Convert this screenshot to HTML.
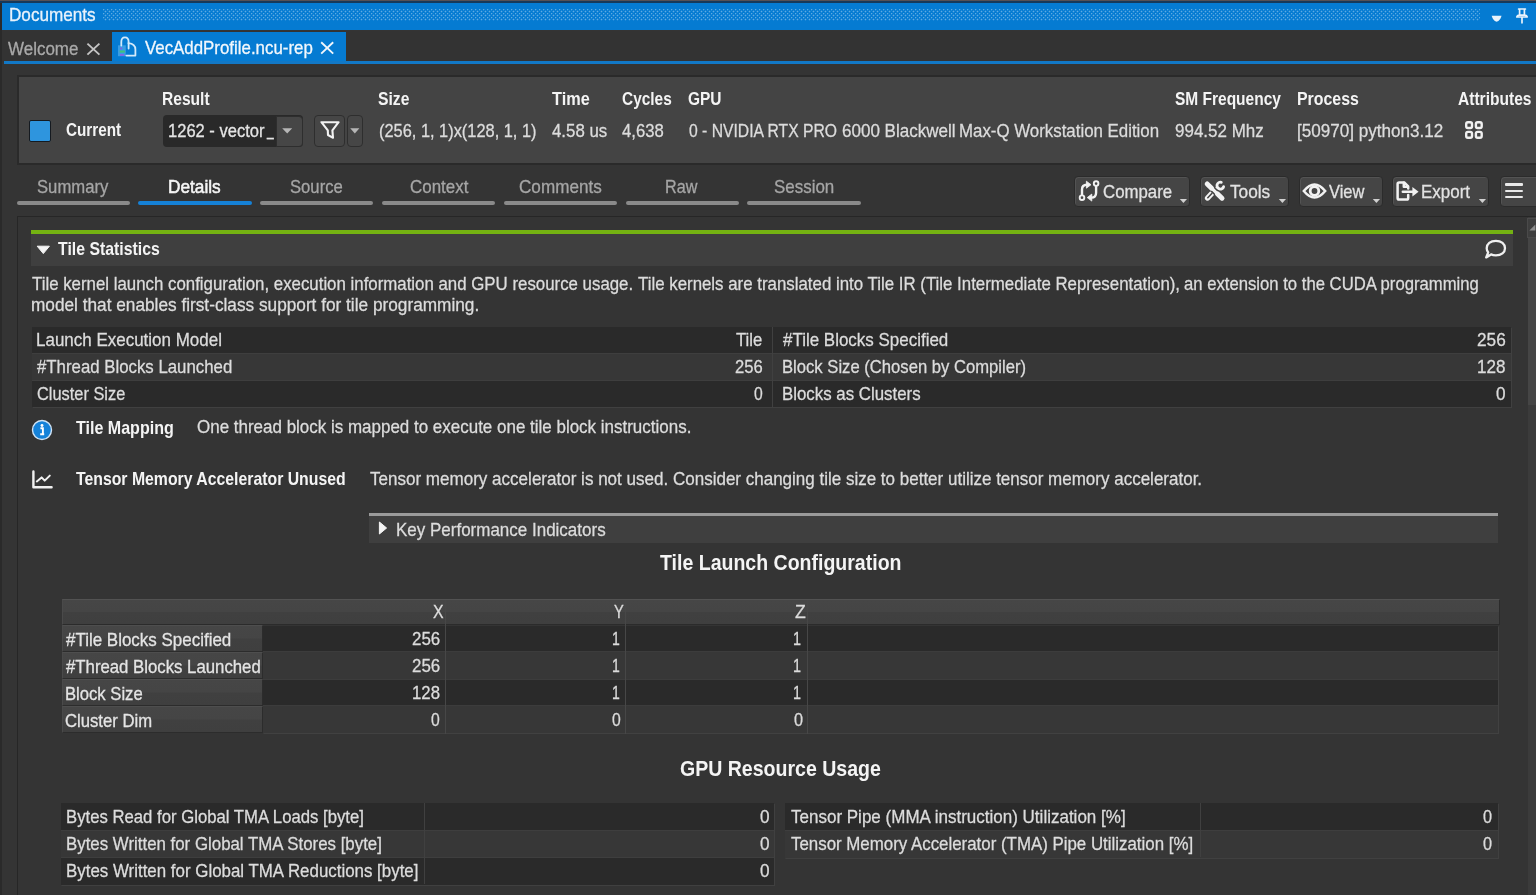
<!DOCTYPE html>
<html lang="en"><head><meta charset="utf-8"><title>VecAddProfile.ncu-rep</title>
<style>
html,body{margin:0;padding:0;}
body{width:1536px;height:895px;overflow:hidden;background:#343434;font-family:"Liberation Sans", Arial, sans-serif;position:relative;}
#app{position:absolute;left:0;top:0;width:1536px;height:895px;overflow:hidden;filter:blur(0.4px);}
#app div,#app svg{position:absolute;box-sizing:border-box;}
.t{position:absolute;white-space:pre;line-height:24px;height:24px;transform-origin:0 50%;display:block;-webkit-text-stroke:0.3px currentColor;}
.act{-webkit-text-stroke:0.55px currentColor;}
</style></head><body><div id="app">
<div style="left:0px;top:0px;width:1536px;height:3px;background:#16395a;"></div>
<div style="left:0px;top:0px;width:1536px;height:1.4px;background:#555055;"></div>
<div style="left:0px;top:3px;width:1.5px;height:892px;background:#2a2a2a;"></div>
<div style="left:2px;top:2.7px;width:1534px;height:27.8px;background:#057bd2;"></div>
<div style="left:103px;top:9px;width:1377px;height:12px;background:radial-gradient(circle at 0.5px 0.5px,rgba(255,255,255,.36) 0.5px,rgba(255,255,255,.10) 1.0px,transparent 1.4px) 0 0/4px 4px,radial-gradient(circle at 2.5px 2.5px,rgba(255,255,255,.36) 0.5px,rgba(255,255,255,.10) 1.0px,transparent 1.4px) 0 0/4px 4px;"></div>
<svg style="left:1490px;top:14px" width="14" height="10" viewBox="0 0 14 10"><path d="M1.7 1.8 H11.5 Q10.5 6.5 6.6 7.8 Q2.7 6.5 1.7 1.8Z" fill="#e8f2fb"/></svg>
<svg style="left:1514px;top:7px" width="16" height="18" viewBox="0 0 16 18"><path d="M4.6 2 H11.4 M5.6 2.4 V8.2 M10.4 2.4 V8.2 M2.8 10 Q3.2 8.4 5 8.2 H11 Q12.8 8.4 13.2 10 Z M8 10.4 V15.8" fill="none" stroke="#eaf3fb" stroke-width="1.7" stroke-linejoin="round" stroke-linecap="round"/></svg>
<div style="left:2px;top:30.5px;width:1534px;height:31px;background:#333333;"></div>
<svg style="left:85px;top:41px" width="17" height="16" viewBox="0 0 17 16"><path d="M2.4 2.6 L14.4 13.6 M14.4 2.6 L2.4 13.6" stroke="#c4c4c4" stroke-width="1.9" fill="none"/></svg>
<div style="left:111.8px;top:31.8px;width:234.2px;height:31.5px;background:#057bd2;"></div>
<div style="left:4px;top:60.7px;width:1532px;height:3.5px;background:#1278c6;"></div>
<svg style="left:116px;top:35px" width="22" height="23" viewBox="0 0 22 23"><rect x="2" y="10.3" width="7.8" height="10.9" fill="#3a9de4"/><g fill="none" stroke="#d3e9fa" stroke-width="1.8" stroke-linecap="round" stroke-linejoin="round"><path d="M5.3 10.6 V7 Q5.3 2.4 9 2.4 Q12.6 2.4 12.6 7 V13.6"/><path d="M12.4 8.2 Q19.4 8.8 19.4 14.6 V20.6 H10.4"/></g><rect x="4" y="12.6" width="2.2" height="1.7" fill="#7d62e2"/><rect x="3.7" y="15.5" width="5.2" height="2.1" fill="#3fc47c"/><rect x="4" y="19.1" width="4.2" height="1.7" fill="#8a5fe6"/></svg>
<svg style="left:319px;top:40px" width="17" height="16" viewBox="0 0 17 16"><path d="M2.2 2.2 L14.2 13.6 M14.2 2.2 L2.2 13.6" stroke="#f0f6fc" stroke-width="1.9" fill="none"/></svg>
<div style="left:16.5px;top:75.4px;width:1530px;height:89.4px;background:#444444;border:2px solid #2a2a2a;"></div>
<div style="left:29px;top:120px;width:22px;height:22px;background:#2e95de;border:1.6px solid #151a20;border-radius:2px;"></div>
<div style="left:162.5px;top:115px;width:140.5px;height:31.8px;background:#292929;border-radius:4px;"></div>
<div style="left:275.5px;top:115.5px;width:27.5px;height:31px;background:#464646;border:1.6px solid #2e2e2e;border-radius:0 4px 4px 0;"></div>
<svg style="left:281px;top:127px" width="13" height="8" viewBox="0 0 13 8"><path d="M1.2 1.2 H11.2 L6.2 6.6Z" fill="#b6b6b6"/></svg>
<div style="left:313.6px;top:115.3px;width:31.8px;height:31.4px;background:#464646;border:1.6px solid #2e2e2e;border-radius:4px;"></div>
<div style="left:347.2px;top:115.3px;width:15.6px;height:31.4px;background:#464646;border:1.6px solid #2e2e2e;border-radius:4px;"></div>
<svg style="left:319px;top:119px" width="22" height="23" viewBox="0 0 22 23"><path d="M2.4 3.2 H19.6 L13.4 11.4 L14 18.8 L9 16 L8.8 11.4 Z" fill="none" stroke="#f2f2f2" stroke-width="2.1" stroke-linejoin="round"/></svg>
<svg style="left:349px;top:127px" width="12" height="8" viewBox="0 0 12 8"><path d="M1.2 1.2 H10.4 L5.8 6.4Z" fill="#b6b6b6"/></svg>
<svg style="left:1465.4px;top:120.7px" width="19" height="19" viewBox="0 0 19 19"><g fill="none" stroke="#f0f0f0" stroke-width="2.4"><rect x="1.2" y="1.2" width="5.8" height="5.8" rx="1.7"/><rect x="10.9" y="1.2" width="5.8" height="5.8" rx="1.7"/><rect x="1.2" y="10.9" width="5.8" height="5.8" rx="1.7"/><rect x="10.9" y="10.9" width="5.8" height="5.8" rx="1.7"/></g></svg>
<div style="left:16.5px;top:201px;width:113.5px;height:4.4px;background:#8a8a8a;border-radius:2.2px;"></div>
<div style="left:138px;top:201px;width:113.5px;height:4.4px;background:#1581d7;border-radius:2.2px;"></div>
<div style="left:260px;top:201px;width:113px;height:4.4px;background:#8a8a8a;border-radius:2.2px;"></div>
<div style="left:381.7px;top:201px;width:113.5px;height:4.4px;background:#8a8a8a;border-radius:2.2px;"></div>
<div style="left:504px;top:201px;width:113px;height:4.4px;background:#8a8a8a;border-radius:2.2px;"></div>
<div style="left:625.5px;top:201px;width:113.5px;height:4.4px;background:#8a8a8a;border-radius:2.2px;"></div>
<div style="left:747px;top:201px;width:114px;height:4.4px;background:#8a8a8a;border-radius:2.2px;"></div>
<div style="left:1074px;top:176.2px;width:116.0px;height:30.8px;background:#454545;border:1px solid #2b2b2b;border-radius:4px;box-shadow:inset 1px 1px 0 #535353;"></div>
<div style="left:1200px;top:176.2px;width:89.0px;height:30.8px;background:#454545;border:1px solid #2b2b2b;border-radius:4px;box-shadow:inset 1px 1px 0 #535353;"></div>
<div style="left:1299px;top:176.2px;width:83.5px;height:30.8px;background:#454545;border:1px solid #2b2b2b;border-radius:4px;box-shadow:inset 1px 1px 0 #535353;"></div>
<div style="left:1392px;top:176.2px;width:96.5px;height:30.8px;background:#454545;border:1px solid #2b2b2b;border-radius:4px;box-shadow:inset 1px 1px 0 #535353;"></div>
<div style="left:1499.5px;top:176.2px;width:46.0px;height:30.8px;background:#454545;border:1px solid #2b2b2b;border-radius:4px;box-shadow:inset 1px 1px 0 #535353;"></div>
<svg style="left:1179px;top:198px" width="9" height="6" viewBox="0 0 9 6"><path d="M0.8 1 H8 L4.4 5Z" fill="#d0d0d0"/></svg>
<svg style="left:1278px;top:198px" width="9" height="6" viewBox="0 0 9 6"><path d="M0.8 1 H8 L4.4 5Z" fill="#d0d0d0"/></svg>
<svg style="left:1372px;top:198px" width="9" height="6" viewBox="0 0 9 6"><path d="M0.8 1 H8 L4.4 5Z" fill="#d0d0d0"/></svg>
<svg style="left:1478px;top:198px" width="9" height="6" viewBox="0 0 9 6"><path d="M0.8 1 H8 L4.4 5Z" fill="#d0d0d0"/></svg>
<svg style="left:1077px;top:179px" width="24" height="24" viewBox="0 0 24 24"><g fill="none" stroke="#f2f2f2" stroke-width="2.4" stroke-linecap="round" stroke-linejoin="round"><path d="M5 16 V10.4 Q5 5.7 9.8 5.7"/><path d="M19.1 7.2 V13.8 Q19.1 18.6 14.4 18.6"/></g><path d="M9.4 2.2 L14 5.7 L9.4 9.2Z" fill="#f2f2f2" stroke="#f2f2f2" stroke-width="0.8" stroke-linejoin="round"/><path d="M14.8 15.1 L10.2 18.6 L14.8 22.1Z" fill="#f2f2f2" stroke="#f2f2f2" stroke-width="0.8" stroke-linejoin="round"/><circle cx="5" cy="18.7" r="2.3" fill="#454545" stroke="#f2f2f2" stroke-width="1.9"/><circle cx="19.1" cy="4.6" r="2.3" fill="#454545" stroke="#f2f2f2" stroke-width="1.9"/></svg>
<svg style="left:1203px;top:179px" width="24" height="24" viewBox="0 0 24 24"><g fill="none" stroke-linecap="round"><path d="M4.6 19 L9 14.2" stroke="#f2f2f2" stroke-width="5.4"/><path d="M4.8 18.8 L8.8 14.4" stroke="#454545" stroke-width="1.5"/><path d="M9.6 12.4 L14.4 8.6" stroke="#f2f2f2" stroke-width="2.8"/><path d="M20.6 7.7 A3.4 3.4 0 1 1 18.3 3.4" stroke="#f2f2f2" stroke-width="2.8"/><path d="M4.2 5 L19 19.2" stroke="#454545" stroke-width="6.4"/><path d="M4.2 5 L8.6 9.2" stroke="#f2f2f2" stroke-width="5"/><path d="M8.6 9.2 L14 14.4" stroke="#f2f2f2" stroke-width="3.2"/><path d="M14.4 14.8 L19 19.2" stroke="#f2f2f2" stroke-width="5"/></g></svg>
<svg style="left:1301.5px;top:180px" width="25" height="22" viewBox="0 0 25 22"><path d="M1.8 11 Q12.5 -2 23.2 11 Q12.5 24 1.8 11Z" fill="none" stroke="#f2f2f2" stroke-width="2.5"/><circle cx="12.5" cy="11" r="4.3" fill="none" stroke="#f2f2f2" stroke-width="2.8"/></svg>
<svg style="left:1394.5px;top:179px" width="26" height="24" viewBox="0 0 26 24"><g fill="none" stroke="#f2f2f2" stroke-width="2.5" stroke-linejoin="round" stroke-linecap="round"><path d="M13.2 16 V19 Q13.2 20.6 11.6 20.6 H4.2 Q2.6 20.6 2.6 19 V5 Q2.6 3.4 4.2 3.4 H9.2 L13.2 7.4 V9.6"/><path d="M8.8 3.8 V7.8 H12.8"/><path d="M7.8 12.8 H18"/></g><path d="M17.4 8 L23.6 12.8 L17.4 17.6Z" fill="#f2f2f2"/></svg>
<div style="left:1504.6px;top:183.2px;width:18.3px;height:2.8px;background:#e8e8e8;border-radius:1px;"></div>
<div style="left:1504.6px;top:189.5px;width:18.3px;height:2.8px;background:#e8e8e8;border-radius:1px;"></div>
<div style="left:1504.6px;top:195.7px;width:18.3px;height:2.8px;background:#e8e8e8;border-radius:1px;"></div>
<div style="left:17px;top:216.3px;width:1530px;height:700px;background:#343434;border:1.3px solid #262626;"></div>
<div style="left:1527.6px;top:217px;width:9px;height:678px;background:#3b3b3b;"></div>
<div style="left:1527.6px;top:238px;width:9px;height:167px;background:#454545;"></div>
<div style="left:1526.5px;top:218px;width:10px;height:19.5px;background:#3e3e3e;border:1px solid #4a4a4a;"></div>
<svg style="left:1529px;top:224px" width="8" height="8" viewBox="0 0 8 8"><path d="M0.4 6.6 L6.4 0.6 V6.6Z" fill="#8c8c8c"/></svg>
<div style="left:30.5px;top:233px;width:1482px;height:32.7px;background:#3f3f3f;"></div>
<div style="left:30.5px;top:230.2px;width:1482px;height:3.8px;background:#74b212;"></div>
<svg style="left:36px;top:245px" width="15" height="10" viewBox="0 0 15 10"><path d="M1.2 1.2 H13.4 L7.3 8.6Z" fill="#f4f4f4" stroke="#f4f4f4" stroke-width="1" stroke-linejoin="round"/></svg>
<svg style="left:1483px;top:238px" width="26" height="22" viewBox="0 0 26 22"><path d="M12.9 2.8 C18.4 2.8 22 6.1 22 10.2 C22 14.3 18.4 17.4 12.9 17.4 C11 17.4 9.4 17.1 8 16.4 L3.2 19.4 L5.2 14.4 C4.2 13.2 3.7 11.8 3.7 10.2 C3.7 6.1 7.4 2.8 12.9 2.8Z" fill="none" stroke="#f0f0f0" stroke-width="2.3" stroke-linejoin="round"/></svg>
<div style="left:31.5px;top:326.8px;width:1480.0px;height:27px;background:#2a2a2a;"></div>
<div style="left:31.5px;top:353.8px;width:1480.0px;height:27px;background:#373737;"></div>
<div style="left:31.5px;top:353.3px;width:1480.0px;height:1px;background:#3e3e3e;"></div>
<div style="left:31.5px;top:380.8px;width:1480.0px;height:27px;background:#2a2a2a;"></div>
<div style="left:31.5px;top:380.3px;width:1480.0px;height:1px;background:#3e3e3e;"></div>
<div style="left:31.5px;top:326.8px;width:1480.0px;height:81.5px;background:transparent;border:1px solid #404040;border-top-color:transparent;border-left-color:transparent;"></div>
<div style="left:772px;top:326.8px;width:1px;height:81px;background:#404040;"></div>
<svg style="left:31.3px;top:418.5px" width="22" height="22" viewBox="0 0 22 22"><circle cx="11" cy="11" r="9.5" fill="#1582d9" stroke="#cfe3f6" stroke-width="1.4"/><circle cx="11" cy="6.5" r="1.45" fill="#fff"/><path d="M9.4 9.2 H11.9 V15.2 M9.2 15.3 H13.2" stroke="#fff" stroke-width="1.9" fill="none"/></svg>
<svg style="left:31px;top:469px" width="23" height="21" viewBox="0 0 23 21"><path d="M2.4 2.4 V18.2 H20.6" fill="none" stroke="#f0f0f0" stroke-width="2.4" stroke-linejoin="round" stroke-linecap="round"/><path d="M5.8 12.4 L10.6 8.4 L13.7 11.6 L18.8 6.6" fill="none" stroke="#f0f0f0" stroke-width="2" stroke-linejoin="round" stroke-linecap="round"/></svg>
<div style="left:369px;top:513px;width:1129px;height:30.2px;background:#3f3f3f;"></div>
<div style="left:369px;top:513px;width:1129px;height:3.2px;background:#9a9a9a;"></div>
<svg style="left:377px;top:520px" width="12" height="16" viewBox="0 0 12 16"><path d="M2.4 2 L9.6 8 L2.4 14Z" fill="#f4f4f4" stroke="#f4f4f4" stroke-width="1" stroke-linejoin="round"/></svg>
<div style="left:62px;top:598.5px;width:1437.5px;height:26.6px;background:linear-gradient(#464646 0,#454545 48%,#404040 52%,#3f3f3f 100%);border:1px solid #525252;border-bottom:1.4px solid #2b2b2b;border-right:1.4px solid #2b2b2b;border-left-color:#4a4a4a;"></div>
<div style="left:262.5px;top:625.6px;width:1235.5px;height:25.600000000000023px;background:#2a2a2a;"></div>
<div style="left:262.5px;top:651.2px;width:1235.5px;height:28.399999999999977px;background:#373737;"></div>
<div style="left:262.5px;top:650.7px;width:1235.5px;height:1px;background:#3c3c3c;"></div>
<div style="left:262.5px;top:679.6px;width:1235.5px;height:25.799999999999955px;background:#2a2a2a;"></div>
<div style="left:262.5px;top:679.1px;width:1235.5px;height:1px;background:#3c3c3c;"></div>
<div style="left:262.5px;top:705.4px;width:1235.5px;height:28.399999999999977px;background:#373737;"></div>
<div style="left:262.5px;top:704.9px;width:1235.5px;height:1px;background:#3c3c3c;"></div>
<div style="left:262.5px;top:625.6px;width:1236px;height:108.8px;background:transparent;border:1px solid #414141;border-top-color:transparent;border-left-color:transparent;"></div>
<div style="left:62px;top:625px;width:200.5px;height:27px;background:linear-gradient(#464646 0,#454545 48%,#404040 52%,#3f3f3f 100%);border:1px solid #2c2c2c;border-top-color:#4e4e4e;border-left-color:#4a4a4a;"></div>
<div style="left:62px;top:652px;width:200.5px;height:27px;background:linear-gradient(#464646 0,#454545 48%,#404040 52%,#3f3f3f 100%);border:1px solid #2c2c2c;border-top-color:#4e4e4e;border-left-color:#4a4a4a;"></div>
<div style="left:62px;top:679px;width:200.5px;height:27px;background:linear-gradient(#464646 0,#454545 48%,#404040 52%,#3f3f3f 100%);border:1px solid #2c2c2c;border-top-color:#4e4e4e;border-left-color:#4a4a4a;"></div>
<div style="left:62px;top:706px;width:200.5px;height:27px;background:linear-gradient(#464646 0,#454545 48%,#404040 52%,#3f3f3f 100%);border:1px solid #2c2c2c;border-top-color:#4e4e4e;border-left-color:#4a4a4a;"></div>
<div style="left:444.5px;top:599.5px;width:1px;height:134px;background:#474747;"></div>
<div style="left:625px;top:599.5px;width:1px;height:134px;background:#474747;"></div>
<div style="left:806.5px;top:599.5px;width:1px;height:134px;background:#474747;"></div>
<div style="left:60.5px;top:803px;width:714.0px;height:27px;background:#2a2a2a;"></div>
<div style="left:60.5px;top:830px;width:714.0px;height:27px;background:#373737;"></div>
<div style="left:60.5px;top:829.5px;width:714.0px;height:1px;background:#3e3e3e;"></div>
<div style="left:60.5px;top:857px;width:714.0px;height:28.3px;background:#2a2a2a;"></div>
<div style="left:60.5px;top:856.5px;width:714.0px;height:1px;background:#3e3e3e;"></div>
<div style="left:60.5px;top:803px;width:714.0px;height:82.8px;background:transparent;border:1px solid #404040;border-top-color:transparent;border-left-color:transparent;"></div>
<div style="left:423.5px;top:803px;width:1px;height:81px;background:#404040;"></div>
<div style="left:784.5px;top:803px;width:714.0px;height:27px;background:#2a2a2a;"></div>
<div style="left:784.5px;top:830px;width:714.0px;height:28.8px;background:#373737;"></div>
<div style="left:784.5px;top:829.5px;width:714.0px;height:1px;background:#3e3e3e;"></div>
<div style="left:784.5px;top:803px;width:714.0px;height:56.3px;background:transparent;border:1px solid #404040;border-top-color:transparent;border-left-color:transparent;"></div>
<div style="left:1200px;top:803px;width:1px;height:54px;background:#404040;"></div>
<span class="t " style="left:9.07px;top:3.09px;font-size:18.50px;color:#e9f2fb;transform:scaleX(0.9262);">Documents</span>
<span class="t " style="left:8.40px;top:36.89px;font-size:18.50px;color:#a9a9a9;transform:scaleX(0.9166);">Welcome</span>
<span class="t " style="left:144.50px;top:36.39px;font-size:18.50px;color:#f2f7fc;transform:scaleX(0.9114);">VecAddProfile.ncu-rep</span>
<span class="t " style="left:65.50px;top:117.69px;font-size:18.50px;color:#f4f4f4;transform:scaleX(0.8252);font-weight:700;-webkit-text-stroke:0;">Current</span>
<span class="t " style="left:162.36px;top:86.69px;font-size:18.50px;color:#f4f4f4;transform:scaleX(0.8415);font-weight:700;-webkit-text-stroke:0;">Result</span>
<span class="t " style="left:378.30px;top:86.69px;font-size:18.50px;color:#f4f4f4;transform:scaleX(0.8495);font-weight:700;-webkit-text-stroke:0;">Size</span>
<span class="t " style="left:551.50px;top:86.69px;font-size:18.50px;color:#f4f4f4;transform:scaleX(0.8812);font-weight:700;-webkit-text-stroke:0;">Time</span>
<span class="t " style="left:621.50px;top:86.69px;font-size:18.50px;color:#f4f4f4;transform:scaleX(0.8338);font-weight:700;-webkit-text-stroke:0;">Cycles</span>
<span class="t " style="left:688.30px;top:86.69px;font-size:18.50px;color:#f4f4f4;transform:scaleX(0.8357);font-weight:700;-webkit-text-stroke:0;">GPU</span>
<span class="t " style="left:1174.50px;top:86.69px;font-size:18.50px;color:#f4f4f4;transform:scaleX(0.8375);font-weight:700;-webkit-text-stroke:0;">SM Frequency</span>
<span class="t " style="left:1296.84px;top:86.69px;font-size:18.50px;color:#f4f4f4;transform:scaleX(0.8599);font-weight:700;-webkit-text-stroke:0;">Process</span>
<span class="t " style="left:1457.50px;top:86.69px;font-size:18.50px;color:#f4f4f4;transform:scaleX(0.8407);font-weight:700;-webkit-text-stroke:0;">Attributes</span>
<span class="t " style="left:168.31px;top:119.09px;font-size:18.50px;color:#e4e4e4;transform:scaleX(0.8931);">1262 - vector</span>
<span class="t " style="left:266.55px;top:116.79px;font-size:18.50px;color:#e4e4e4;transform:scaleX(0.6500);">_</span>
<span class="t " style="left:378.61px;top:119.09px;font-size:18.50px;color:#dcdcdc;transform:scaleX(0.8855);">(256, 1, 1)x(128, 1, 1)</span>
<span class="t " style="left:551.50px;top:119.09px;font-size:18.50px;color:#dcdcdc;transform:scaleX(0.9101);">4.58 us</span>
<span class="t " style="left:622.00px;top:119.09px;font-size:18.50px;color:#dcdcdc;transform:scaleX(0.9020);">4,638</span>
<span class="t " style="left:688.50px;top:119.09px;font-size:18.50px;color:#dcdcdc;transform:scaleX(0.8483);">0 - NVIDIA RTX PRO</span>
<span class="t " style="left:842.40px;top:119.09px;font-size:18.50px;color:#dcdcdc;transform:scaleX(0.9207);">6000 Blackwell</span>
<span class="t " style="left:959.49px;top:119.09px;font-size:18.50px;color:#dcdcdc;transform:scaleX(0.9108);">Max-Q Workstation Edition</span>
<span class="t " style="left:1174.50px;top:119.09px;font-size:18.50px;color:#dcdcdc;transform:scaleX(0.9178);">994.52 Mhz</span>
<span class="t " style="left:1296.78px;top:119.09px;font-size:18.50px;color:#dcdcdc;transform:scaleX(0.9228);">[50970] python3.12</span>
<span class="t " style="left:37.00px;top:174.69px;font-size:18.50px;color:#a6a6a6;transform:scaleX(0.9011);">Summary</span>
<span class="t act" style="left:168.07px;top:174.69px;font-size:18.50px;color:#f6f6f6;transform:scaleX(0.9313);">Details</span>
<span class="t " style="left:290.00px;top:174.69px;font-size:18.50px;color:#a6a6a6;transform:scaleX(0.9001);">Source</span>
<span class="t " style="left:409.50px;top:174.69px;font-size:18.50px;color:#a6a6a6;transform:scaleX(0.9149);">Context</span>
<span class="t " style="left:519.00px;top:174.69px;font-size:18.50px;color:#a6a6a6;transform:scaleX(0.9250);">Comments</span>
<span class="t " style="left:665.13px;top:174.69px;font-size:18.50px;color:#a6a6a6;transform:scaleX(0.8731);">Raw</span>
<span class="t " style="left:774.00px;top:174.69px;font-size:18.50px;color:#a6a6a6;transform:scaleX(0.9157);">Session</span>
<span class="t " style="left:1103.00px;top:180.29px;font-size:18.50px;color:#e2e2e2;transform:scaleX(0.9077);">Compare</span>
<span class="t " style="left:1230.00px;top:180.29px;font-size:18.50px;color:#e2e2e2;transform:scaleX(0.9316);">Tools</span>
<span class="t " style="left:1328.50px;top:180.29px;font-size:18.50px;color:#e2e2e2;transform:scaleX(0.8910);">View</span>
<span class="t " style="left:1421.08px;top:180.29px;font-size:18.50px;color:#e2e2e2;transform:scaleX(0.9173);">Export</span>
<span class="t " style="left:58.00px;top:236.69px;font-size:18.50px;color:#f4f4f4;transform:scaleX(0.8555);font-weight:700;-webkit-text-stroke:0;">Tile Statistics</span>
<span class="t " style="left:31.50px;top:272.39px;font-size:18.50px;color:#dcdcdc;transform:scaleX(0.9101);">Tile kernel launch configuration, execution information and GPU resource usage.</span>
<span class="t " style="left:637.90px;top:272.39px;font-size:18.50px;color:#dcdcdc;transform:scaleX(0.9110);">Tile kernels are translated into Tile IR (Tile Intermediate Representation),</span>
<span class="t " style="left:1184.00px;top:272.39px;font-size:18.50px;color:#dcdcdc;transform:scaleX(0.9016);">an extension to the CUDA programming</span>
<span class="t " style="left:30.57px;top:293.09px;font-size:18.50px;color:#dcdcdc;transform:scaleX(0.9314);">model that enables first-class support for tile programming.</span>
<span class="t " style="left:36.08px;top:327.99px;font-size:18.50px;color:#dcdcdc;transform:scaleX(0.9177);">Launch Execution Model</span>
<span class="t " style="left:736.00px;top:327.99px;font-size:18.50px;color:#dcdcdc;transform:scaleX(0.9017);">Tile</span>
<span class="t " style="left:37.00px;top:354.89px;font-size:18.50px;color:#dcdcdc;transform:scaleX(0.9084);">#Thread Blocks Launched</span>
<span class="t " style="left:734.50px;top:354.89px;font-size:18.50px;color:#dcdcdc;transform:scaleX(0.8994);">256</span>
<span class="t " style="left:37.00px;top:381.89px;font-size:18.50px;color:#dcdcdc;transform:scaleX(0.8850);">Cluster Size</span>
<span class="t " style="left:753.50px;top:381.89px;font-size:18.50px;color:#dcdcdc;transform:scaleX(0.8500);">0</span>
<span class="t " style="left:782.50px;top:327.99px;font-size:18.50px;color:#dcdcdc;transform:scaleX(0.9167);">#Tile Blocks Specified</span>
<span class="t " style="left:1476.50px;top:327.99px;font-size:18.50px;color:#dcdcdc;transform:scaleX(0.9321);">256</span>
<span class="t " style="left:781.60px;top:354.89px;font-size:18.50px;color:#dcdcdc;transform:scaleX(0.8991);">Block Size (Chosen by Compiler)</span>
<span class="t " style="left:1476.78px;top:354.89px;font-size:18.50px;color:#dcdcdc;transform:scaleX(0.9230);">128</span>
<span class="t " style="left:781.59px;top:381.89px;font-size:18.50px;color:#dcdcdc;transform:scaleX(0.9112);">Blocks as Clusters</span>
<span class="t " style="left:1495.70px;top:381.89px;font-size:18.50px;color:#dcdcdc;transform:scaleX(0.9300);">0</span>
<span class="t " style="left:76.20px;top:415.69px;font-size:18.50px;color:#f4f4f4;transform:scaleX(0.8673);font-weight:700;-webkit-text-stroke:0;">Tile Mapping</span>
<span class="t " style="left:196.70px;top:415.09px;font-size:18.50px;color:#dcdcdc;transform:scaleX(0.9174);">One thread block is mapped to execute one tile block instructions.</span>
<span class="t " style="left:76.20px;top:466.89px;font-size:18.50px;color:#f4f4f4;transform:scaleX(0.8544);font-weight:700;-webkit-text-stroke:0;">Tensor Memory Accelerator Unused</span>
<span class="t " style="left:369.50px;top:466.89px;font-size:18.50px;color:#dcdcdc;transform:scaleX(0.9208);">Tensor memory accelerator is not used.</span>
<span class="t " style="left:672.70px;top:466.89px;font-size:18.50px;color:#dcdcdc;transform:scaleX(0.9188);">Consider changing tile size to better utilize tensor memory accelerator.</span>
<span class="t " style="left:395.58px;top:517.69px;font-size:18.50px;color:#dcdcdc;transform:scaleX(0.9184);">Key Performance Indicators</span>
<span class="t " style="left:659.70px;top:551.27px;font-size:22.61px;color:#f4f4f4;transform:scaleX(0.8635);font-weight:700;-webkit-text-stroke:0;">Tile Launch Configuration</span>
<span class="t " style="left:432.70px;top:599.89px;font-size:18.50px;color:#dcdcdc;transform:scaleX(0.8583);">X</span>
<span class="t " style="left:614.00px;top:599.89px;font-size:18.50px;color:#dcdcdc;transform:scaleX(0.7917);">Y</span>
<span class="t " style="left:795.00px;top:599.89px;font-size:18.50px;color:#dcdcdc;transform:scaleX(0.9545);">Z</span>
<span class="t " style="left:65.50px;top:627.69px;font-size:18.50px;color:#e4e4e4;transform:scaleX(0.9167);">#Tile Blocks Specified</span>
<span class="t " style="left:65.50px;top:654.69px;font-size:18.50px;color:#e4e4e4;transform:scaleX(0.9061);">#Thread Blocks Launched</span>
<span class="t " style="left:64.60px;top:681.79px;font-size:18.50px;color:#e4e4e4;transform:scaleX(0.8992);">Block Size</span>
<span class="t " style="left:65.30px;top:708.69px;font-size:18.50px;color:#e4e4e4;transform:scaleX(0.9012);">Cluster Dim</span>
<span class="t " style="left:411.50px;top:626.69px;font-size:18.50px;color:#dcdcdc;transform:scaleX(0.9157);">256</span>
<span class="t " style="left:411.50px;top:653.69px;font-size:18.50px;color:#dcdcdc;transform:scaleX(0.9157);">256</span>
<span class="t " style="left:411.79px;top:680.79px;font-size:18.50px;color:#dcdcdc;transform:scaleX(0.9061);">128</span>
<span class="t " style="left:431.00px;top:707.69px;font-size:18.50px;color:#dcdcdc;transform:scaleX(0.8500);">0</span>
<span class="t " style="left:611.94px;top:626.69px;font-size:18.50px;color:#dcdcdc;transform:scaleX(0.7556);">1</span>
<span class="t " style="left:611.94px;top:653.69px;font-size:18.50px;color:#dcdcdc;transform:scaleX(0.7556);">1</span>
<span class="t " style="left:611.94px;top:680.79px;font-size:18.50px;color:#dcdcdc;transform:scaleX(0.7556);">1</span>
<span class="t " style="left:612.00px;top:707.69px;font-size:18.50px;color:#dcdcdc;transform:scaleX(0.8500);">0</span>
<span class="t " style="left:793.22px;top:626.69px;font-size:18.50px;color:#dcdcdc;transform:scaleX(0.7778);">1</span>
<span class="t " style="left:793.22px;top:653.69px;font-size:18.50px;color:#dcdcdc;transform:scaleX(0.7778);">1</span>
<span class="t " style="left:793.22px;top:680.79px;font-size:18.50px;color:#dcdcdc;transform:scaleX(0.7778);">1</span>
<span class="t " style="left:793.50px;top:707.69px;font-size:18.50px;color:#dcdcdc;transform:scaleX(0.8800);">0</span>
<span class="t " style="left:680.20px;top:756.67px;font-size:22.61px;color:#f4f4f4;transform:scaleX(0.8638);font-weight:700;-webkit-text-stroke:0;">GPU Resource Usage</span>
<span class="t " style="left:65.60px;top:805.19px;font-size:18.50px;color:#dcdcdc;transform:scaleX(0.9034);">Bytes Read for Global TMA Loads [byte]</span>
<span class="t " style="left:759.50px;top:805.19px;font-size:18.50px;color:#dcdcdc;transform:scaleX(0.9300);">0</span>
<span class="t " style="left:65.59px;top:832.19px;font-size:18.50px;color:#dcdcdc;transform:scaleX(0.9108);">Bytes Written for Global TMA Stores [byte]</span>
<span class="t " style="left:759.50px;top:832.19px;font-size:18.50px;color:#dcdcdc;transform:scaleX(0.9300);">0</span>
<span class="t " style="left:65.59px;top:859.19px;font-size:18.50px;color:#dcdcdc;transform:scaleX(0.9132);">Bytes Written for Global TMA Reductions [byte]</span>
<span class="t " style="left:759.50px;top:859.19px;font-size:18.50px;color:#dcdcdc;transform:scaleX(0.9300);">0</span>
<span class="t " style="left:791.00px;top:805.19px;font-size:18.50px;color:#dcdcdc;transform:scaleX(0.9194);">Tensor Pipe (MMA instruction) Utilization [%]</span>
<span class="t " style="left:1483.20px;top:805.19px;font-size:18.50px;color:#dcdcdc;transform:scaleX(0.8800);">0</span>
<span class="t " style="left:791.00px;top:832.19px;font-size:18.50px;color:#dcdcdc;transform:scaleX(0.9117);">Tensor Memory Accelerator (TMA) Pipe Utilization [%]</span>
<span class="t " style="left:1483.20px;top:832.19px;font-size:18.50px;color:#dcdcdc;transform:scaleX(0.8800);">0</span>
</div></body></html>
